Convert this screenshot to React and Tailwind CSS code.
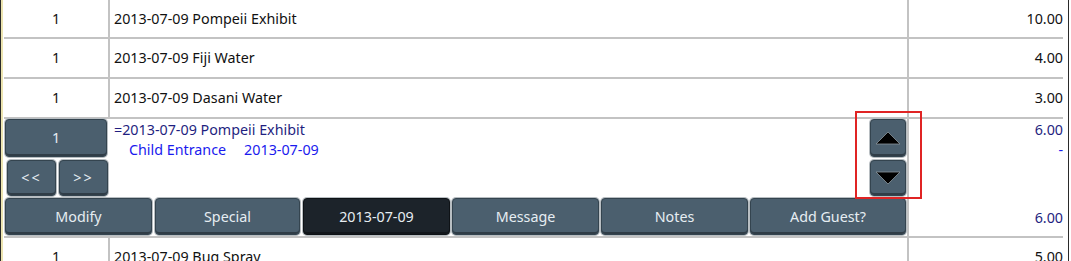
import React from 'react';

const font = { fontFamily: '"Noto Sans", "Open Sans", sans-serif' };

const rows = [
    { qty: '1', desc: '2013-07-09 Pompeii Exhibit', price: '10.00', h: 'h-[39px]' },
    { qty: '1', desc: '2013-07-09 Fiji Water', price: '4.00', h: 'h-[40px]' },
    { qty: '1', desc: '2013-07-09 Dasani Water', price: '3.00', h: 'h-[40px]' },
];

const actions = [
    { label: 'Modify', w: 'w-[147px]' },
    { label: 'Special', w: 'w-[145px] ml-[3px]' },
    { label: '2013-07-09', w: 'w-[147px] ml-[3px]', dark: true },
    { label: 'Message', w: 'w-[147px] ml-[2px]' },
    { label: 'Notes', w: 'w-[147px] ml-[2px]' },
    { label: 'Add Guest?', w: 'w-[156px] ml-[2px]' },
];

function Btn({ children, className = '', dark }) {
    return (
        <div
            className={`flex items-center justify-center rounded-[4px] border text-[14.3px] text-[#e6edf2] shadow-[inset_0_-2px_0_rgba(0,0,0,0.35),0_0_0_1px_#b8bec2] ${
                dark ? 'bg-[#1c232a] border-[#0e1216]' : 'bg-[#4b5f6e] border-[#34444f]'
            } ${className}`}
        >
            {children}
        </div>
    );
}

function Row({ qty, desc, price, h }) {
    return (
        <div className={`flex ${h} shrink-0 border-b-2 border-[#c3c3c3] text-[14.3px] text-[#111]`}>
            <div className="w-[106px] border-r-2 border-[#c3c3c3] flex items-center justify-center">{qty}</div>
            <div className="w-[799px] border-r-2 border-[#c3c3c3] flex items-center pl-[4px]">{desc}</div>
            <div className="flex-1 flex items-center justify-end">{price}</div>
        </div>
    );
}

function Arrow({ up }) {
    return (
        <svg width="26" height="14" viewBox="0 0 26 14">
            <polygon
                points={up ? '13,1 25,13 1,13' : '1,1 25,1 13,13'}
                fill="#000"
                stroke="#8a959c"
                strokeWidth="0.8"
            />
        </svg>
    );
}

export default function App() {
    return (
        <div className="relative w-[1071px] h-[261px] overflow-hidden bg-white flex" style={font}>
            <div className="w-[1px] bg-[#2a2a2a]" />
            <div className="w-[2px] bg-[#ece4b0]" />
            <div className="w-[1px]" />

            {/* table */}
            <div className="w-[1059px] flex flex-col">
                {rows.map((r, i) => (
                    <Row key={i} {...r} />
                ))}

                {/* expanded row */}
                <div className="flex h-[119px] shrink-0 border-b-2 border-[#c3c3c3]">
                    <div className="w-[903px] flex flex-col">
                        <div className="flex h-[79px]">
                            <div className="w-[104px] pl-[1px] flex flex-col gap-[3px]">
                                <Btn className="h-[38px] w-[102px]">1</Btn>
                                <div className="flex gap-[3px] pl-[2px]">
                                    <Btn className="h-[36px] w-[49px] text-[13px] tracking-[2px]">&lt;&lt;</Btn>
                                    <Btn className="h-[36px] w-[49px] text-[13px] tracking-[2px]">&gt;&gt;</Btn>
                                </div>
                            </div>
                            <div className="flex-1 pl-[6px] pt-[1px] text-[14.3px] leading-[20px]">
                                <div className="text-[#1f1f80]">=2013-07-09 Pompeii Exhibit</div>
                                <div className="text-[#1a1aee] pl-[15px] flex gap-[18px]">
                                    <span>Child Entrance</span>
                                    <span>2013-07-09</span>
                                </div>
                            </div>
                            <div className="w-[36px] mr-[1px] flex flex-col gap-[3px]">
                                <Btn className="h-[38px]">
                                    <Arrow up />
                                </Btn>
                                <Btn className="h-[36px]">
                                    <Arrow />
                                </Btn>
                            </div>
                        </div>
                        <div className="flex pl-[1px] pt-[0px]">
                            {actions.map((a) => (
                                <Btn key={a.label} dark={a.dark} className={`${a.w} h-[37px]`}>
                                    {a.label}
                                </Btn>
                            ))}
                        </div>
                    </div>
                    <div className="w-[2px] bg-[#c3c3c3]" />
                    <div className="flex-1 flex flex-col items-end text-[14.3px] leading-[20px] pt-[1px]">
                        <div className="text-[#1f1f80]">6.00</div>
                        <div className="text-[#1a1aee]">-</div>
                        <div className="mt-auto mb-[8px] text-[#1f1f80]">6.00</div>
                    </div>
                </div>

                <Row qty="1" desc="2013-07-09 Bug Spray" price="5.00" h="h-[40px]" />
            </div>

            <div className="w-[5px]" />
            <div className="w-[1px] bg-[#2a2a2a]" />

            {/* highlight box */}
            <div className="absolute left-[855px] top-[111px] w-[67px] h-[88px] border-2 border-[#e02424]" />
        </div>
    );
}
